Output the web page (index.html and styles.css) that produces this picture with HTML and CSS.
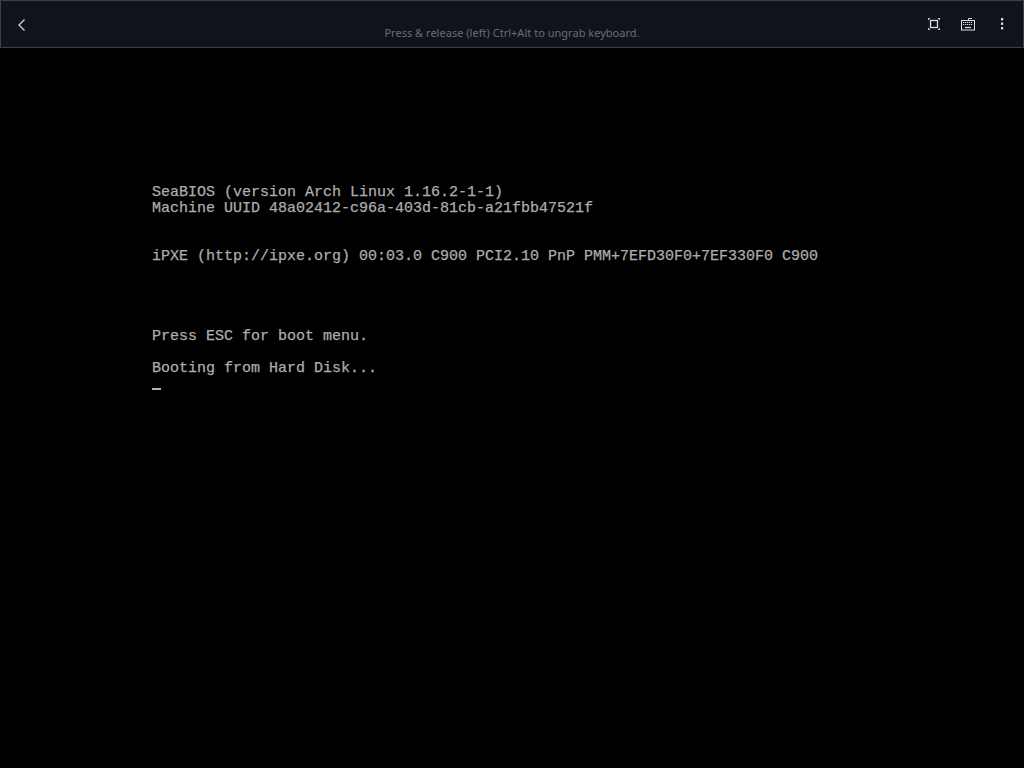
FILE: index.html
```html
<!DOCTYPE html>
<html lang="en">
<head>
<meta charset="utf-8">
<title>SeaBIOS</title>
<link rel="stylesheet" href="styles.css">
</head>
<body>
<header class="topbar">
  <button class="icon-btn back" aria-label="Back">
    <svg width="10" height="14" viewBox="0 0 10 14"><path d="M7.5 1.5 2 7l5.500 5.500" fill="none" stroke="#d8d8de" stroke-width="1.200"/></svg>
  </button>
  <div class="hint">Press &amp; release (left) Ctrl+Alt to ungrab keyboard.</div>
  <div class="actions">
    <button class="icon-btn fullscreen" aria-label="Fullscreen">
      <svg width="14" height="14" viewBox="0 0 14 14" fill="none" stroke="#dcdce2" stroke-width="1"><path d="M1.500 3V1.500H3M11 1.500h1.500V3M1.500 11v1.500H3M11 12.500h1.500V11"/><rect x="3.500" y="3.500" width="7" height="7" stroke-width="1.300"/></svg>
    </button>
    <button class="icon-btn keyboard" aria-label="Keyboard">
      <svg width="16" height="14" viewBox="0 0 16 14" fill="none" stroke="#dcdce2" stroke-width="1"><path d="M8.500 3.500V1.500H12"/><rect x="1.500" y="3.500" width="13" height="9.500"/><path d="M3 5.500h10M3 7.500h10" stroke-width="1.200" stroke-dasharray="1.200 .8"/><path d="M5 10.500h6" stroke-width="1.200"/></svg>
    </button>
    <button class="icon-btn" aria-label="Menu">
      <svg width="4" height="12" viewBox="0 0 4 12" fill="#dcdce2"><rect x="1" y="0" width="2.200" height="2.400"/><rect x="1" y="4.500" width="2.200" height="2.400"/><rect x="1" y="9" width="2.200" height="2.400"/></svg>
    </button>
  </div>
</header>
<main class="screen">
  <div class="line">SeaBIOS (version Arch Linux 1.16.2-1-1)</div>
  <div class="line">Machine UUID 48a02412-c96a-403d-81cb-a21fbb47521f</div>
  <div class="line"></div>
  <div class="line"></div>
  <div class="line">iPXE (http://ipxe.org) 00:03.0 C900 PCI2.10 PnP PMM+7EFD30F0+7EF330F0 C900</div>
  <div class="line"></div>
  <div class="line"></div>
  <div class="line"></div>
  <div class="line"></div>
  <div class="line">Press ESC for boot menu.</div>
  <div class="line"></div>
  <div class="line">Booting from Hard Disk...</div>
  <div class="line cursor-line"><span class="cursor"></span></div>
</main>
</body>
</html>
```
FILE: styles.css
```css
html, body {
  margin: 0;
  height: 100%;
  background: #000;
}
body {
  display: flex;
  flex-direction: column;
  overflow: hidden;
}
.topbar {
  box-sizing: border-box;
  height: 48px;
  flex: none;
  display: flex;
  align-items: center;
  justify-content: space-between;
  background: #11131c;
  border: 1px solid #3d3d4b;
  position: relative;
}
.icon-btn {
  background: none;
  border: 0;
  padding: 0;
  display: flex;
  align-items: center;
  justify-content: center;
}
.back {
  margin-left: 16px;
  margin-top: 1px;
}
.hint {
  position: absolute;
  left: 0;
  right: 0;
  top: 24px;
  text-align: center;
  font: 11px/16px "Noto Sans", sans-serif;
  letter-spacing: 0.02px;
  color: #6a6b78;
}
.actions {
  display: flex;
  align-items: center;
  margin-right: 19px;
}
.fullscreen {
  margin-right: 19px;
}
.keyboard {
  margin-right: 24px;
}
.screen {
  flex: 1;
  padding: 137px 0 0 152px;
  color: #adadad;
  font: 15px/16px "Liberation Mono", monospace;
  -webkit-text-stroke: 0.25px #adadad;
}
.line {
  height: 16px;
  white-space: pre;
}
.cursor-line {
  padding-top: 11px;
}
.cursor {
  display: block;
  width: 9px;
  height: 2px;
  background: #b4b4b4;
}
```
